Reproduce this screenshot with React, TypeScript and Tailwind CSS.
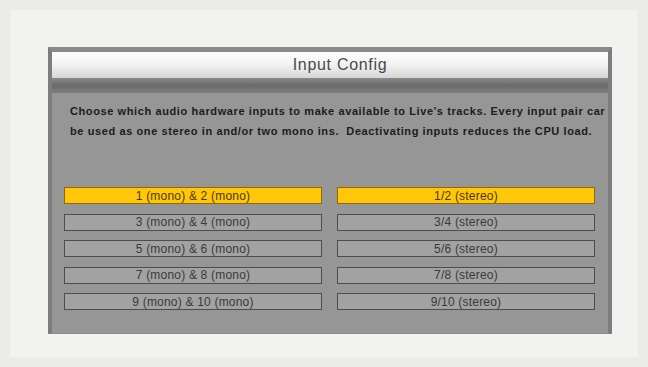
import React from "react";

const left = ["1 (mono) & 2 (mono)", "3 (mono) & 4 (mono)", "5 (mono) & 6 (mono)", "7 (mono) & 8 (mono)", "9 (mono) & 10 (mono)"];
const right = ["1/2 (stereo)", "3/4 (stereo)", "5/6 (stereo)", "7/8 (stereo)", "9/10 (stereo)"];

function Btn({ label, on }: { label: string; on: boolean }) {
  return (
    <div
      className={
        on
          ? "h-[17px] flex items-center justify-center bg-[#ffc60a] border border-[#8f6c00] text-[12px] tracking-[0.2px] leading-none text-[#4a3800]"
          : "h-[17px] flex items-center justify-center bg-[#a2a2a2] border border-[#4d4d4d] text-[12px] tracking-[0.2px] leading-none text-[#3a3a3a]"
      }
    >
      {label}
    </div>
  );
}

export default function App() {
  return (
    <div className="w-[648px] h-[367px] bg-[#ebebe9] p-[10px] overflow-hidden" style={{ fontFamily: '"Liberation Sans", Arial, sans-serif' }}>
      <div className="w-full h-full bg-[#f2f2f0] pt-[37px] pl-[38px]">
        <div className="w-[564px] h-[287px] bg-[#969696] border-x-[4px] border-t-[5px] border-b-[1px] border-x-[#7d7d7d] border-t-[#8a8a8a] border-b-[#8a8a8a] flex flex-col">
          <div className="h-[26px] pl-[20px] bg-gradient-to-b from-[#fefefe] via-[#f2f2f2] to-[#d6d6d6] flex items-center justify-center text-[16px] tracking-[0.7px] text-[#4a4a4a]">
            Input Config
          </div>
          <div className="h-[15px] bg-gradient-to-b from-[#8a8a8a] via-[#6a6a6a] to-[#7e7e7e]" />
          <div className="pl-[18px] pt-[8px] text-[11px] tracking-[0.6px] font-bold leading-[20px] text-[#1c1c1c] whitespace-nowrap overflow-hidden">
            <div>Choose which audio hardware inputs to make available to Live's tracks. Every input pair car</div>
            <div>be used as one stereo in and/or two mono ins.&nbsp; Deactivating inputs reduces the CPU load.</div>
          </div>
          <div className="mt-[46px] pl-[12px] flex gap-[15px]">
            <div className="w-[258px] flex flex-col gap-[9.5px]">
              {left.map((l, i) => (
                <Btn key={l} label={l} on={i === 0} />
              ))}
            </div>
            <div className="w-[258px] flex flex-col gap-[9.5px]">
              {right.map((l, i) => (
                <Btn key={l} label={l} on={i === 0} />
              ))}
            </div>
          </div>
        </div>
      </div>
    </div>
  );
}
